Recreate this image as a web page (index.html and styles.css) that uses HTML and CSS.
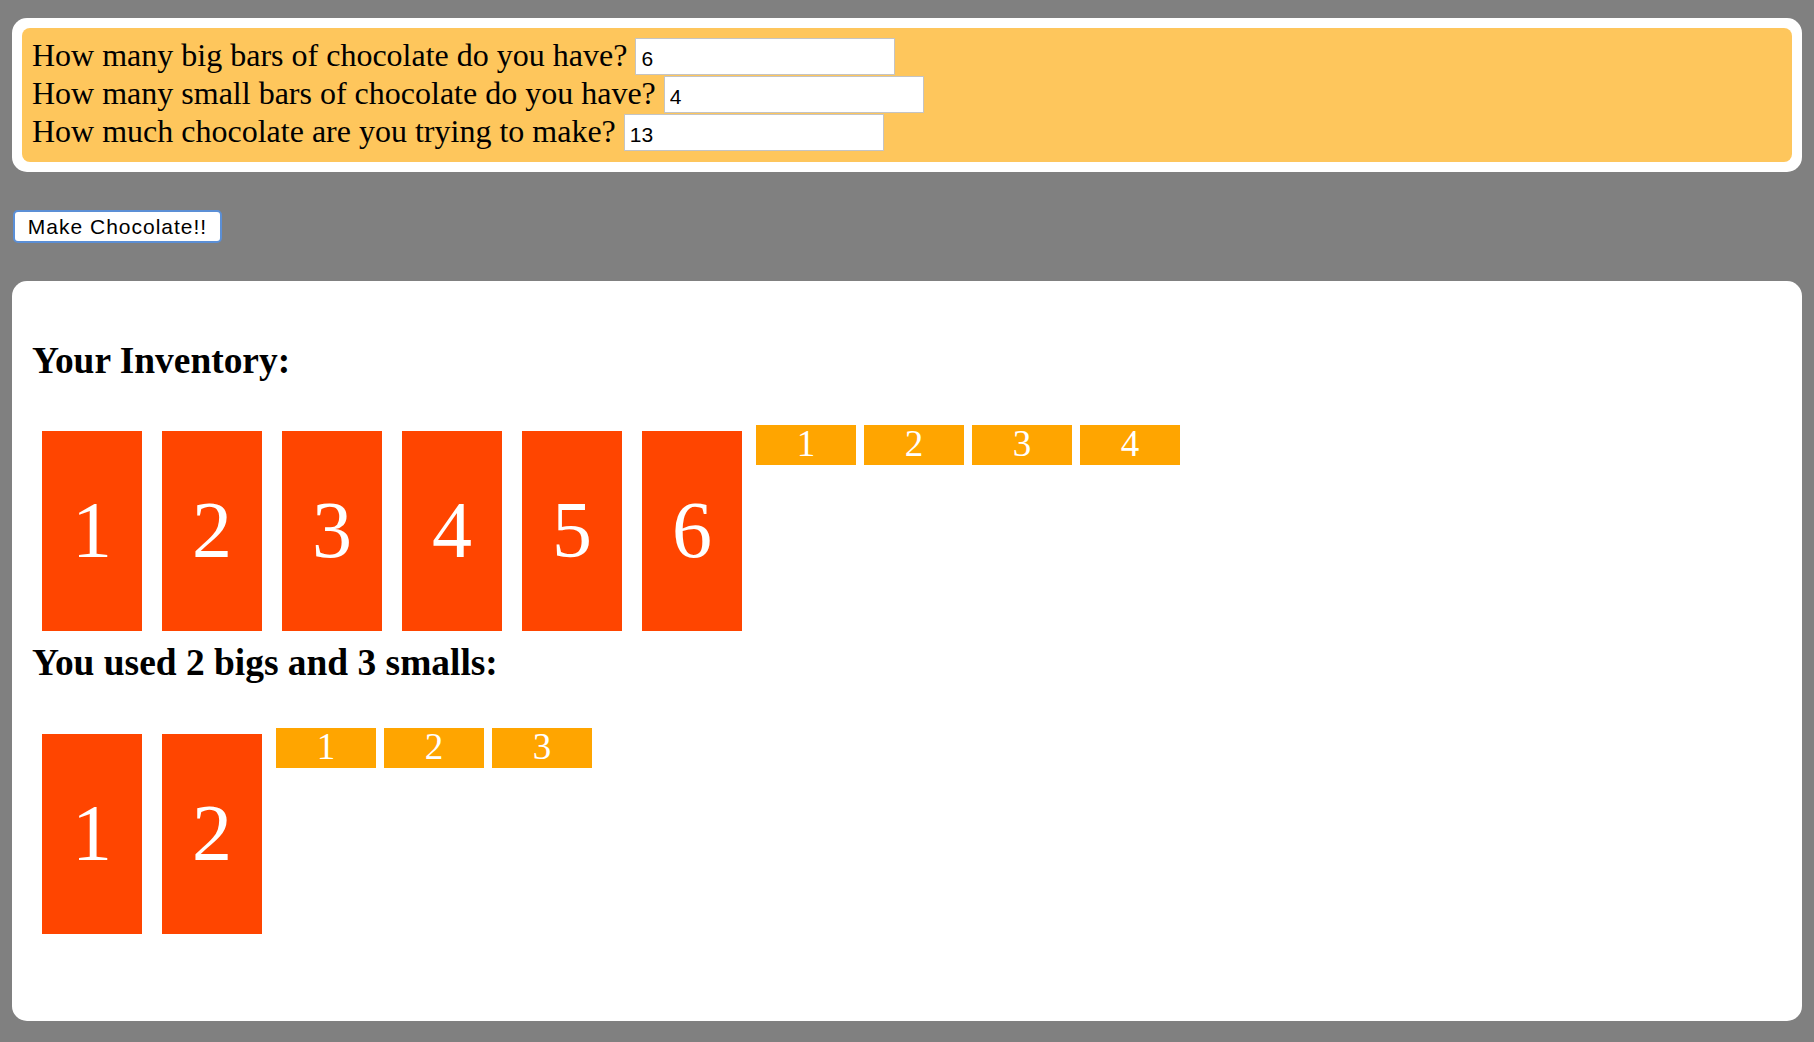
FILE: index.html
```html
<!DOCTYPE html>
<html>
<head>
<meta charset="utf-8">
<title>Make Chocolate</title>
<link rel="stylesheet" href="styles.css">
</head>
<body>
<div class="page">
  <div class="form-card">
    <div class="form-inner">
      <div class="q"><span class="q-label">How many big bars of chocolate do you have?</span><input class="num" type="text" value="6"></div>
      <div class="q"><span class="q-label">How many small bars of chocolate do you have?</span><input class="num" type="text" value="4"></div>
      <div class="q"><span class="q-label">How much chocolate are you trying to make?</span><input class="num" type="text" value="13"></div>
    </div>
  </div>
  <button class="make">Make Chocolate!!</button>
  <div class="result-card">
    <h3 class="title">Your Inventory:</h3>
    <div class="bars">
      <div class="big">1</div>
      <div class="big">2</div>
      <div class="big">3</div>
      <div class="big">4</div>
      <div class="big">5</div>
      <div class="big">6</div>
      <div class="small">1</div>
      <div class="small">2</div>
      <div class="small">3</div>
      <div class="small">4</div>
    </div>
    <h3 class="title">You used 2 bigs and 3 smalls:</h3>
    <div class="bars">
      <div class="big">1</div>
      <div class="big">2</div>
      <div class="small">1</div>
      <div class="small">2</div>
      <div class="small">3</div>
    </div>
  </div>
</div>
</body>
</html>
```
FILE: styles.css
```css
html, body {
  margin: 0;
  padding: 0;
  background: #808080;
}

body {
  font-family: "Liberation Sans", Arial, sans-serif;
  color: #000;
}

.page {
  padding: 18px 12px 0;
  font-family: "Liberation Serif", "Times New Roman", serif;
}

.form-card {
  background: #fff;
  border-radius: 15px;
  padding: 10px;
}

.form-inner {
  background: #fec65c;
  border-radius: 8px;
  padding: 10px;
}

.q {
  display: flex;
  align-items: flex-start;
  gap: 8px;
  height: 38.1px;
  font-size: 32px;
}

.q-label {
  line-height: 34px;
  white-space: nowrap;
}

.num {
  box-sizing: border-box;
  width: 260px;
  height: 37px;
  margin: 0;
  border: 1px solid #c4c4c4;
  border-radius: 0;
  padding: 4px 5px 0;
  background: #fff;
  color: #000;
  font-family: "Liberation Sans", Arial, sans-serif;
  font-size: 21px;
  outline: none;
}

.make {
  display: block;
  box-sizing: border-box;
  margin: 38px 0 0 1px;
  width: 209px;
  height: 33px;
  padding: 0;
  border: 2px solid #5b8fd6;
  border-radius: 5px;
  background: #fff;
  color: #000;
  font-family: "Liberation Sans", Arial, sans-serif;
  font-size: 21px;
  letter-spacing: 1px;
}

.result-card {
  margin-top: 38px;
  background: #fff;
  border-radius: 15px;
  padding: 57.5px 20px 77px;
}

.title {
  margin: 0 0 39.5px;
  font-size: 37.44px;
  line-height: 43px;
  font-weight: bold;
}

.bars {
  display: flex;
  align-items: flex-start;
}

.big {
  width: 100px;
  height: 200px;
  margin: 10px;
  background: #ff4500;
  color: #fff;
  font-size: 80px;
  line-height: 198px;
  text-align: center;
}

.small {
  width: 100px;
  height: 40px;
  margin: 4px;
  background: #ffa500;
  color: #fff;
  font-size: 37px;
  line-height: 38px;
  text-align: center;
}
```
